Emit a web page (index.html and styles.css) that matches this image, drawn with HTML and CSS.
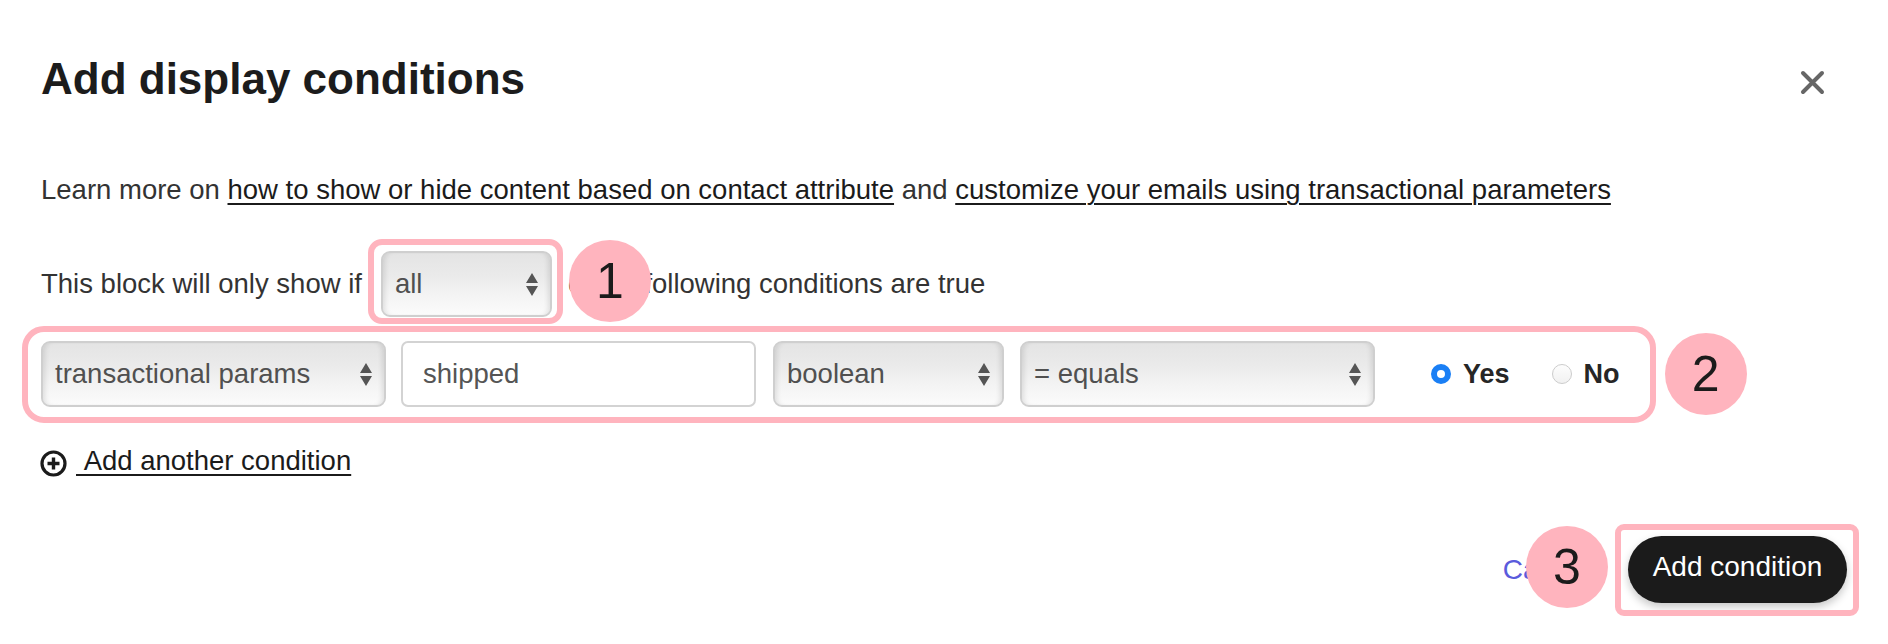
FILE: index.html
```html
<!DOCTYPE html>
<html lang="en">
<head>
<meta charset="utf-8">
<title>Add display conditions</title>
<link rel="stylesheet" href="styles.css">
</head>
<body>
<div class="modal">
  <header class="head">
    <h1 class="title">Add display conditions</h1>
    <button class="close" aria-label="Close">
      <svg width="25" height="25" viewBox="0 0 25 25"><path d="M3 3 L22 22 M22 3 L3 22" stroke="#666" stroke-width="4" stroke-linecap="round" fill="none"/></svg>
    </button>
  </header>

  <p class="learn">Learn more on <a href="#">how to show or hide content based on contact attribute</a> and <a href="#">customize your emails using transactional parameters</a></p>

  <div class="rule">
    <span class="rule-text">This block will only show if</span>
    <span class="hl-all">
      <span class="select w-all"><span class="select-label">all</span><svg class="arrows" width="12" height="23" viewBox="0 0 12 23"><path d="M0 10 L6 0 L12 10 Z M0 13 L12 13 L6 23 Z" fill="#555"/></svg></span>
      <span class="badge badge-1">1</span>
    </span>
    <span class="rule-text rule-after">of the following conditions are true</span>
  </div>

  <div class="cond-wrap">
    <div class="cond">
      <span class="select w-attr"><span class="select-label">transactional params</span><svg class="arrows" width="12" height="23" viewBox="0 0 12 23"><path d="M0 10 L6 0 L12 10 Z M0 13 L12 13 L6 23 Z" fill="#555"/></svg></span>
      <span class="input w-name">shipped</span>
      <span class="select w-type"><span class="select-label">boolean</span><svg class="arrows" width="12" height="23" viewBox="0 0 12 23"><path d="M0 10 L6 0 L12 10 Z M0 13 L12 13 L6 23 Z" fill="#555"/></svg></span>
      <span class="select w-op"><span class="select-label">= equals</span><svg class="arrows" width="12" height="23" viewBox="0 0 12 23"><path d="M0 10 L6 0 L12 10 Z M0 13 L12 13 L6 23 Z" fill="#555"/></svg></span>
      <span class="radio radio-yes"><span class="dot dot-on"></span>Yes</span>
      <span class="radio radio-no"><span class="dot"></span>No</span>
      <span class="badge badge-2">2</span>
    </div>
  </div>

  <div class="add-another">
    <svg class="plus" width="27" height="27" viewBox="0 0 27 27"><circle cx="13.5" cy="13.5" r="11.5" stroke="#1b1b1b" stroke-width="3.2" fill="none"/><path d="M13.5 7.5 V19.5 M7.5 13.5 H19.5" stroke="#1b1b1b" stroke-width="3.4" fill="none"/></svg>
    <a href="#" class="add-link">&nbsp;Add another condition</a>
  </div>

  <div class="foot">
    <a href="#" class="cancel">Cancel</a>
    <span class="hl-btn">
      <button class="primary">Add condition</button>
      <span class="badge badge-3">3</span>
    </span>
  </div>
</div>
</body>
</html>
```

FILE: styles.css
```css
* { box-sizing: border-box; }

html, body {
  margin: 0;
  background: #ffffff;
}

body {
  font-family: "Liberation Sans", Arial, Helvetica, sans-serif;
  color: #333333;
  width: 1888px;
  height: 644px;
  overflow: hidden;
}

.modal {
  padding: 53px 41px 0 41px;
}

.head {
  display: flex;
  justify-content: space-between;
  align-items: center;
}

.title {
  margin: 0;
  font-size: 44px;
  line-height: 52px;
  font-weight: 700;
  color: #1c1c1c;
}

.close {
  width: 25px;
  height: 25px;
  padding: 0;
  margin: 6px 22px 0 0;
  border: 0;
  background: none;
  display: block;
}
.close svg { display: block; }

.learn {
  margin: 65px 0 0;
  font-size: 27.5px;
  line-height: 40px;
  color: #333333;
}

.learn a,
.add-link {
  color: #1b1b1b;
  text-decoration: underline;
  text-decoration-thickness: 2px;
  text-underline-offset: 4px;
}

.rule {
  margin-top: 41px;
  display: flex;
  align-items: center;
  font-size: 27.5px;
  line-height: 40px;
  color: #333333;
}

.rule-text { white-space: nowrap; }
.rule-after { margin-left: 16px; }

.hl-all {
  position: relative;
  display: inline-flex;
  margin-left: 19px;
}
.hl-all::after {
  content: "";
  position: absolute;
  top: -12px;
  left: -13px;
  right: -11px;
  bottom: -7px;
  border: 6px solid #ffb4be;
  border-radius: 14px;
  pointer-events: none;
}

.select {
  height: 66px;
  display: inline-flex;
  align-items: center;
  justify-content: space-between;
  padding: 0 12px 0 12px;
  border: 2px solid #cfcfcf;
  border-radius: 9px;
  background: linear-gradient(to bottom, #e4e4e4 0%, #eaeaea 35%, #f4f4f4 70%, #fbfbfb 100%);
  box-shadow: inset 5px 0 5px -3px rgba(0,0,0,0.10), inset -5px 0 5px -3px rgba(0,0,0,0.10);
  font-size: 27.5px;
  color: #505050;
  white-space: nowrap;
}
.select-label { line-height: 40px; }
.arrows { display: block; flex: none; }

.w-all { width: 171px; }
.w-attr { width: 345px; }
.w-type { width: 231px; margin-left: 17px; }
.w-op { width: 355px; margin-left: 16px; }

.input {
  height: 66px;
  width: 355px;
  margin-left: 15px;
  display: inline-flex;
  align-items: center;
  padding: 0 20px;
  border: 2px solid #d3d3d3;
  border-radius: 7px;
  background: #ffffff;
  font-size: 27.5px;
  color: #555555;
}

.cond-wrap {
  margin-top: 24px;
}

.cond {
  position: relative;
  display: inline-flex;
  align-items: center;
}
.cond::after {
  content: "";
  position: absolute;
  top: -15px;
  left: -19px;
  right: -36px;
  bottom: -16px;
  border: 6px solid #ffb4be;
  border-radius: 22px;
  pointer-events: none;
}

.radio {
  display: inline-flex;
  align-items: center;
  gap: 12px;
  font-size: 27px;
  font-weight: 700;
  color: #262626;
}
.radio-yes { margin-left: 56px; }
.radio-no { margin-left: 42px; }

.dot {
  width: 20px;
  height: 20px;
  border-radius: 50%;
  border: 1px solid #cccccc;
  background: linear-gradient(#fdfdfd, #f1f1f1);
  flex: none;
}
.dot-on {
  border: 6px solid #1a7ff5;
  background: #ffffff;
}

.badge {
  position: absolute;
  width: 82px;
  height: 82px;
  border-radius: 50%;
  background: #ffb4be;
  color: #1b1b1b;
  font-size: 50px;
  line-height: 82px;
  text-align: center;
  font-weight: 400;
  top: 50%;
  margin-top: -41px;
}
.badge-1 { left: calc(100% + 17px); margin-top: -44px; }
.badge-2 { left: calc(100% + 45px); }
.badge-3 { right: calc(100% + 20px); margin-top: -44px; }

.add-another {
  margin-top: 34px;
  display: flex;
  align-items: center;
  font-size: 27.5px;
  line-height: 40px;
}
.plus { display: block; margin-left: -1px; margin-right: 9px; margin-top: 4px; }

.foot {
  margin-top: 55px;
  display: flex;
  justify-content: flex-end;
  align-items: center;
}

.cancel {
  font-size: 28px;
  color: #5a5bdc;
  text-decoration: none;
  margin-right: 38px;
  margin-top: 0;
}

.hl-btn {
  position: relative;
  display: inline-flex;
}
.hl-btn::after {
  content: "";
  position: absolute;
  top: -12px;
  left: -13px;
  right: -12px;
  bottom: -13px;
  border: 6px solid #ffb4be;
  border-radius: 9px;
  pointer-events: none;
}

.primary {
  height: 67px;
  width: 219px;
  border: 0;
  border-radius: 34px;
  background: #1b1b1b;
  color: #ffffff;
  font-family: "Liberation Sans", Arial, Helvetica, sans-serif;
  font-size: 28px;
  line-height: 60px;
  padding: 0 0 6px;
  box-shadow: 0 4px 8px rgba(0,0,0,0.22);
}
```
